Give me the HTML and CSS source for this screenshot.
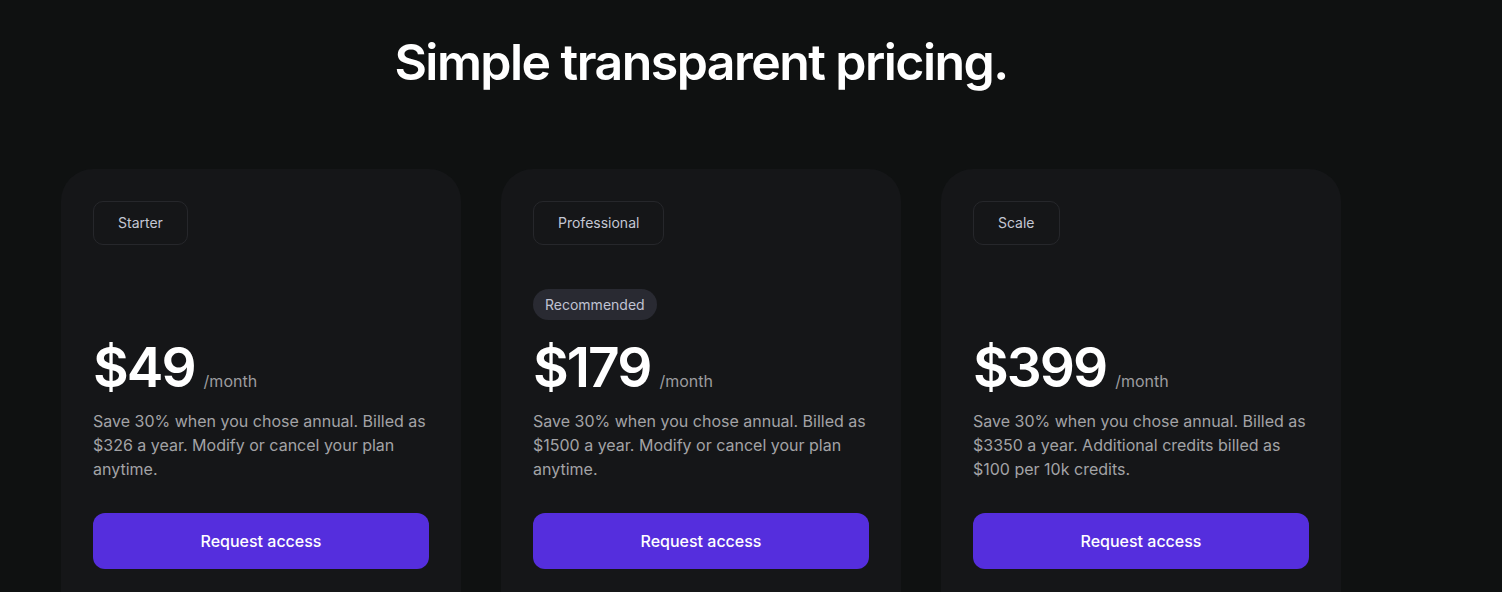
FILE: index.html
```html
<!DOCTYPE html>
<html lang="en">
<head>
<meta charset="utf-8">
<title>Pricing</title>
<link rel="stylesheet" href="styles.css">
</head>
<body>
<section class="pricing">
  <h1 class="title">Simple transparent pricing.</h1>
  <div class="cards">
    <div class="card">
      <div class="plan">Starter</div>
      <div class="badge-slot"></div>
      <div class="price-row"><span class="price">$49</span><span class="per">/month</span></div>
      <p class="desc">Save 30% when you chose annual. Billed as $326 a year. Modify or cancel your plan anytime.</p>
      <button class="cta">Request access</button>
    </div>
    <div class="card">
      <div class="plan">Professional</div>
      <div class="badge-slot"><span class="badge">Recommended</span></div>
      <div class="price-row"><span class="price">$179</span><span class="per">/month</span></div>
      <p class="desc">Save 30% when you chose annual. Billed as $1500 a year. Modify or cancel your plan anytime.</p>
      <button class="cta">Request access</button>
    </div>
    <div class="card">
      <div class="plan">Scale</div>
      <div class="badge-slot"></div>
      <div class="price-row"><span class="price">$399</span><span class="per">/month</span></div>
      <p class="desc">Save 30% when you chose annual. Billed as $3350 a year. Additional credits billed as $100 per 10k credits.</p>
      <button class="cta">Request access</button>
    </div>
  </div>
</section>
</body>
</html>
```
FILE: styles.css
```css
* { box-sizing: border-box; }
html, body { margin: 0; padding: 0; }
body {
  background: #0f1111;
  font-family: Inter, "Noto Sans", sans-serif;
  color: #fff;
  height: 592px;
  overflow: hidden;
}
.pricing {
  width: 1280px;
  margin-left: 61px;
  padding-top: 32px;
}
.title {
  margin: 0;
  text-align: center;
  font-size: 50px;
  line-height: 60px;
  font-weight: 600;
  letter-spacing: -1.55px;
  color: #fff;
}
.cards {
  display: flex;
  gap: 40px;
  margin-top: 77px;
}
.card {
  width: 400px;
  height: 480px;
  background: #151618;
  border-radius: 32px;
  padding: 32px;
  display: flex;
  flex-direction: column;
  align-items: flex-start;
}
.plan {
  height: 44px;
  padding: 0 24px 1px;
  display: flex;
  align-items: center;
  border: 1px solid #26272b;
  border-radius: 10px;
  font-size: 14px;
  line-height: 20px;
  color: #c4c7d4;
}
.badge-slot {
  height: 31px;
  margin-top: 44px;
}
.badge {
  display: inline-flex;
  align-items: center;
  height: 31px;
  padding: 0 12px;
  border-radius: 16px;
  background: #292a32;
  font-size: 14px;
  color: #c0c3d2;
}
.price-row {
  display: flex;
  align-items: baseline;
  gap: 9px;
  margin-top: 16px;
}
.price {
  font-size: 55px;
  line-height: 62px;
  font-weight: 600;
  letter-spacing: -2px;
  color: #fff;
}
.per {
  font-size: 16px;
  color: #9c9c9f;
}
.desc {
  margin: 11px 0 0;
  font-size: 16px;
  line-height: 24px;
  color: #a3a3a6;
  width: 336px;
}
.cta {
  margin-top: 32px;
  width: 336px;
  height: 56px;
  border: 0;
  border-radius: 12px;
  background: #552edd;
  color: #fff;
  font-family: Inter, sans-serif;
  font-size: 16px;
  font-weight: 450;
}
```
